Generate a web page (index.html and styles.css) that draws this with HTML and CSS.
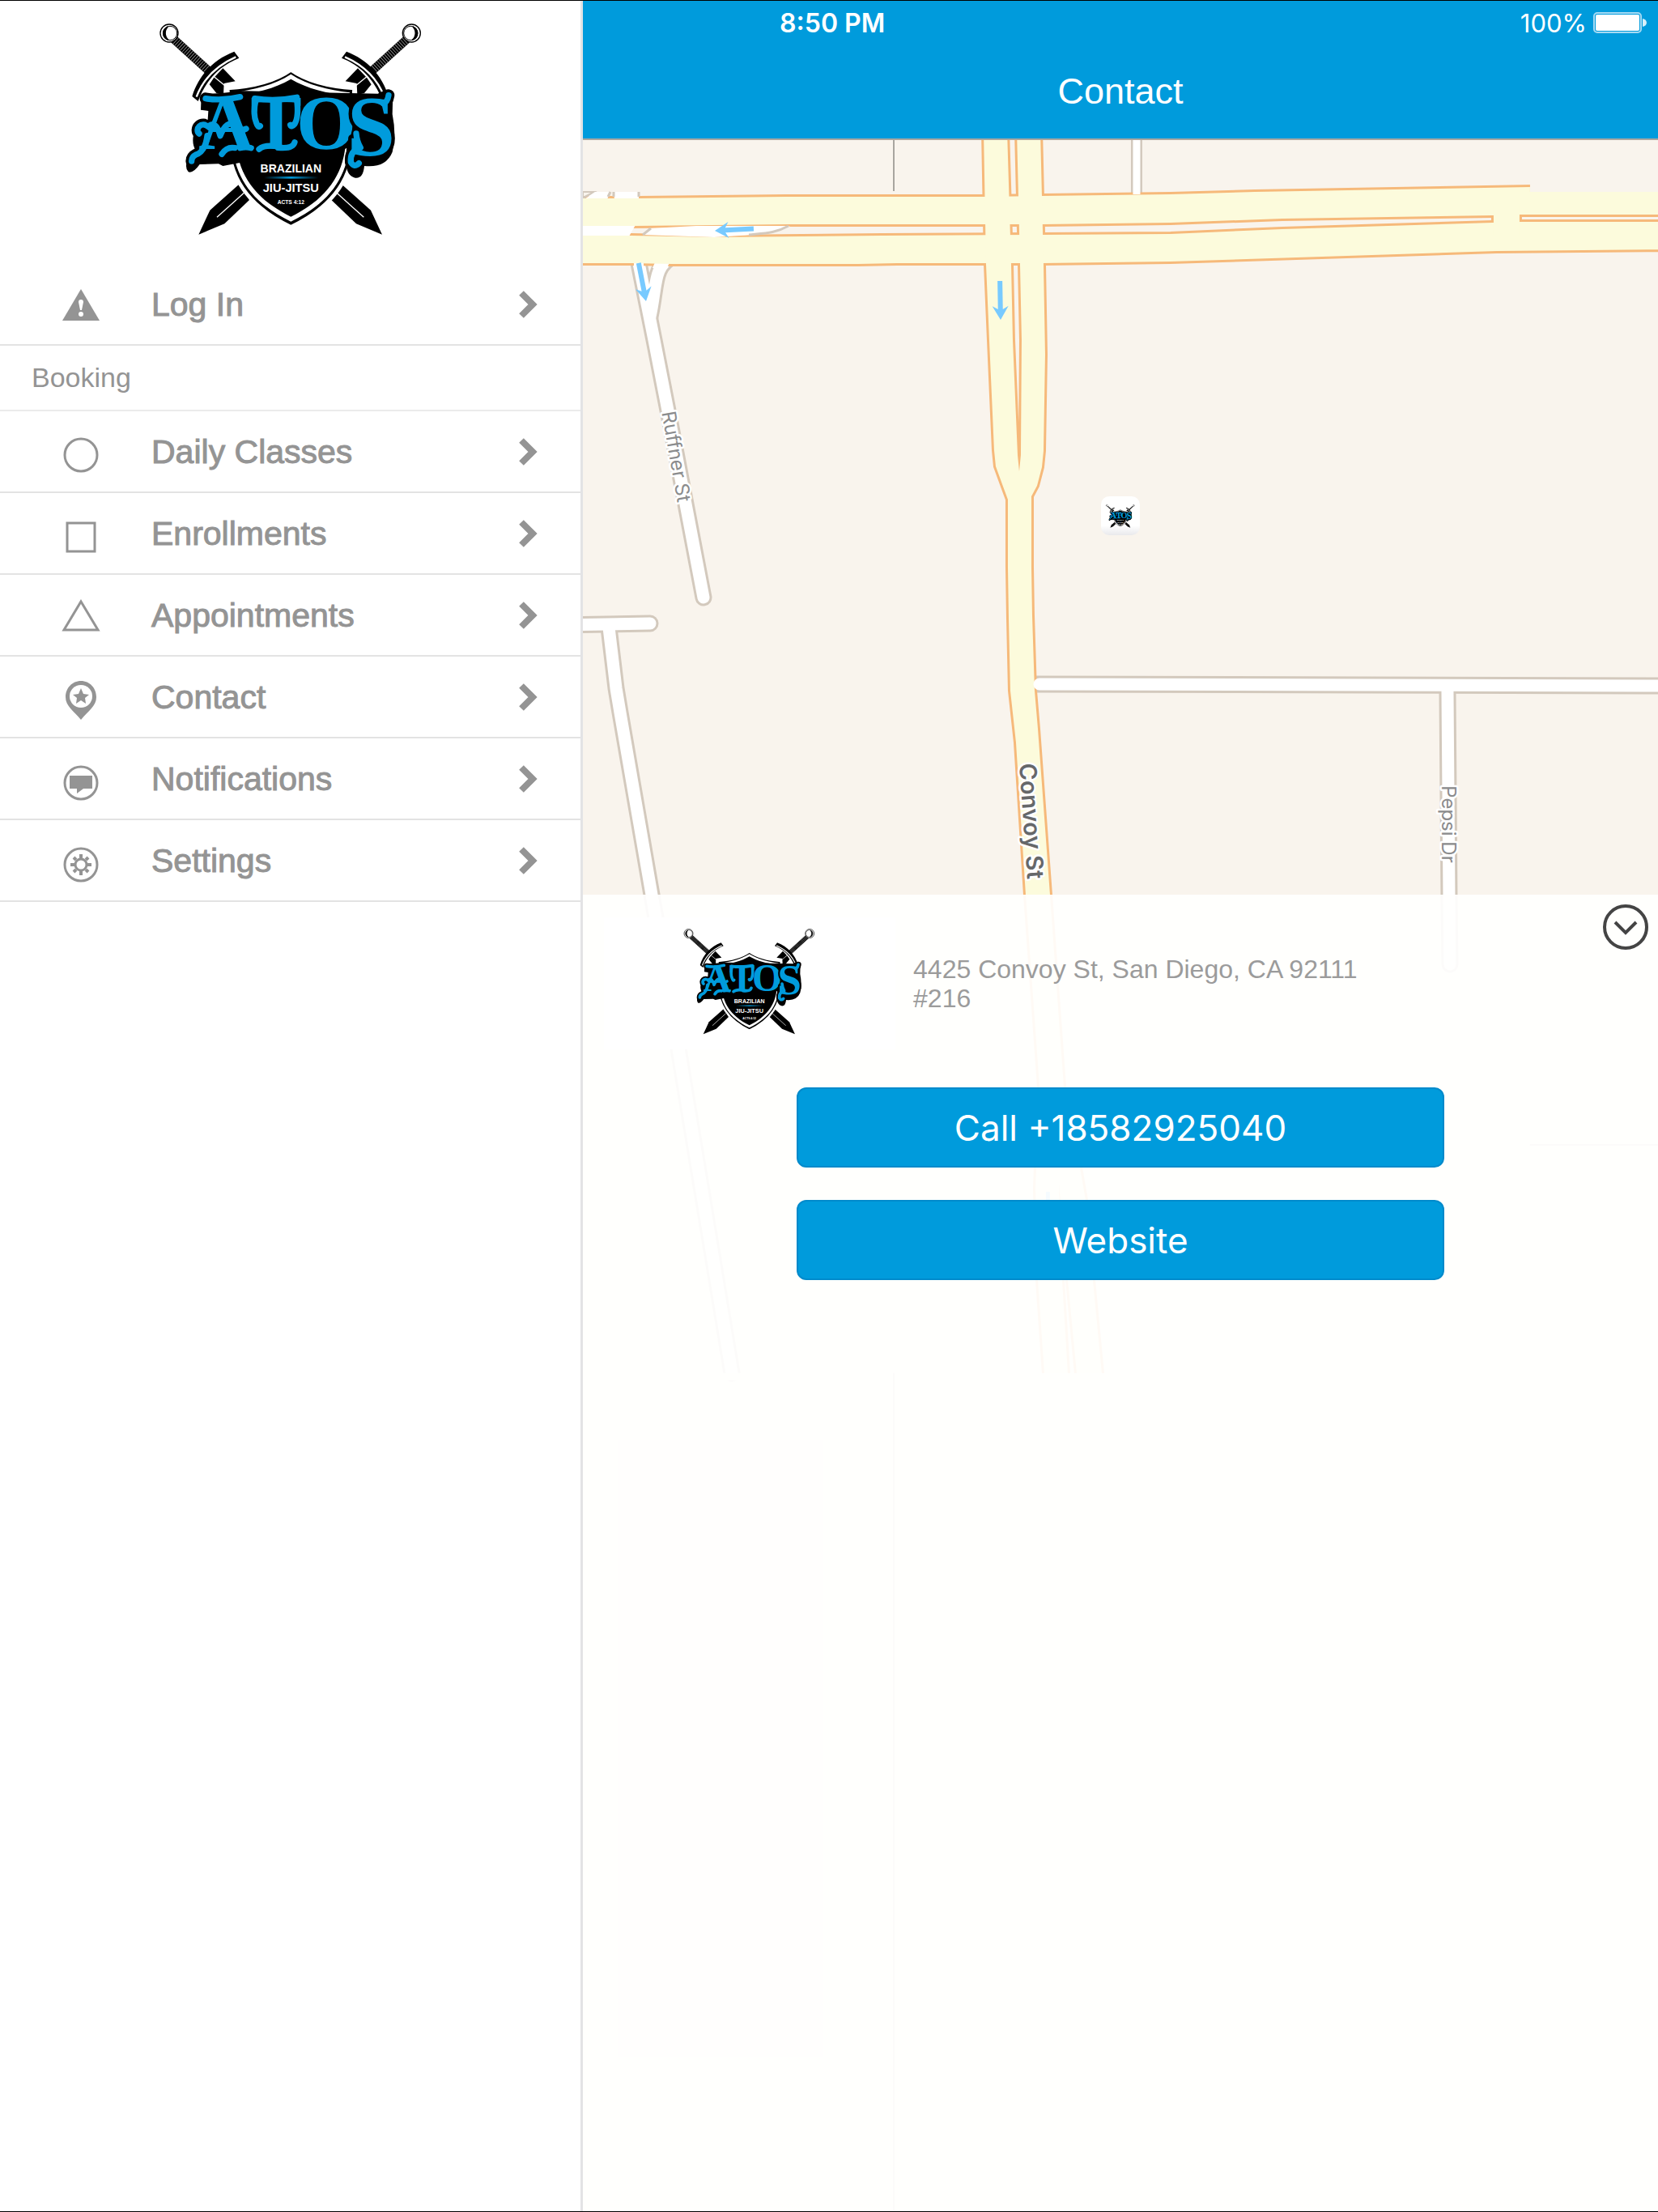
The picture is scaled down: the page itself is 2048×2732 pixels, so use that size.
FILE: index.html
```html
<!DOCTYPE html>
<html lang="en">
<head>
<meta charset="utf-8">
<meta name="viewport" content="width=device-width, initial-scale=1">
<title>Contact</title>
<link rel="stylesheet" href="styles.css">
</head>
<body>
<svg class="defs" aria-hidden="true">
  <defs>
    <linearGradient id="rule" x1="0" x2="1"><stop offset="0" stop-color="#009bdc" stop-opacity="0"/><stop offset=".5" stop-color="#009bdc"/><stop offset="1" stop-color="#009bdc" stop-opacity="0"/></linearGradient>
    <linearGradient id="pinface" x1="0" x2="0" y1="0" y2="1"><stop offset=".75" stop-color="#fff"/><stop offset="1" stop-color="#e9e9ec"/></linearGradient>
    <g id="sword">
      <path d="M348 678 L384 738 L292 826 L196 866 L238 776Z"/>
      <path d="M364 712 L264 802" stroke="#fff" stroke-width="4"/>
      <path d="M104 142 L236 262" stroke="#000" stroke-width="32"/>
      <path d="M104 142 L236 262" stroke="#fff" stroke-width="30" stroke-dasharray="2 7" opacity=".7"/>
      <path d="M252 286 L286 250 L332 298 L290 306 L288 348 L262 342 L236 310Z"/>
      <path d="M254 282 L298 318" stroke="#fff" stroke-width="4"/>
      <path d="M328 188 L346 212 C280 238 226 286 194 372 L172 354 C196 276 250 218 328 188Z"/>
      <path d="M334 208 C262 240 214 286 188 356" fill="none" stroke="#fff" stroke-width="7"/>
      <circle cx="87" cy="120" r="33" fill="#fff" stroke="#000" stroke-width="4"/>
      <circle cx="90" cy="120" r="26" fill="#fff" stroke="#000" stroke-width="3"/>
      <path d="M82 96 A26 26 0 0 0 84 145 A34 34 0 0 1 82 96Z" stroke="#000" stroke-width="4"/>
    </g>
    <g id="flourish" fill="none" stroke-linecap="round" stroke-linejoin="round">
      <path d="M222 362 Q285 372 350 356"/>
      <path d="M236 470 C205 440 180 478 198 492 M236 462 Q262 446 276 500 Q300 440 330 462 Q352 486 372 474"/>
      <path d="M228 500 Q220 560 186 570 Q170 578 170 594 M330 545 Q300 540 282 568 M350 545 Q372 540 390 545"/>
      <path d="M404 362 Q480 374 560 358 M408 366 Q396 420 410 452 Q416 472 424 464 M560 366 Q568 430 552 456 Q540 470 536 460"/>
      <path d="M490 540 Q440 532 420 550 M490 544 Q545 550 552 524"/>
      <path d="M880 380 Q896 376 900 350 M780 492 Q782 520 796 544 Q756 556 760 598 Q772 620 790 602"/>
    </g>
    <symbol id="logo" viewBox="0 0 1080 930">
      <use href="#sword"/>
      <use href="#sword" transform="translate(1072 0) scale(-1 1)"/>
      <path d="M538 256 C600 300 680 318 772 324 V500 C772 650 700 760 538 838 C376 760 304 650 304 500 V324 C396 318 476 300 538 256Z" stroke="#fff" stroke-width="14"/>
      <path d="M538 272 C600 312 676 330 756 340 V500 C756 640 690 745 538 818 C386 745 320 640 320 500 V340 C400 330 476 312 538 272Z" fill="#fff"/>
      <path d="M538 290 C600 326 670 342 742 352 V500 C742 630 680 730 538 800 C396 730 334 630 334 500 V352 C406 342 476 326 538 290Z"/>
      <path d="M206 350 L360 334 L860 344 Q900 320 916 344 L914 420 Q930 500 914 560 Q890 620 810 612 Q806 660 776 656 Q744 648 742 600 L744 545 L700 580 L400 590 L286 612 L270 604 L200 606 Q176 640 158 634 Q144 620 154 590 L186 556 Q164 520 186 470 L230 440 L232 408 L204 404Z"/>
      <use href="#flourish" stroke="#000" stroke-width="44"/>
      <g class="logo-word">
        <text x="196 388 558" y="548">ATO</text>
        <text class="logo-last" x="746" y="572">S</text>
      </g>
      <use href="#flourish" stroke="#009bdc" stroke-width="22"/>
      <g class="logo-lines">
        <text x="538" y="635" font-size="42">BRAZILIAN</text>
        <text x="538" y="707" font-size="44">JIU-JITSU</text>
        <text x="538" y="754" font-size="20">ACTS 4:12</text>
      </g>
      <rect x="438" y="651" width="202" height="8" fill="url(#rule)"/>
    </symbol>
    <symbol id="chevron" viewBox="0 0 24 36"><path d="M4 4 L18 18 L4 32" fill="none" stroke="#949494" stroke-width="8"/></symbol>
    <g id="highways">
      <path d="M700 245 H790 L970 243 H1218 L1288 242 L1446 240 L1550 237 L1890 231 V237 H2070 V265 H1878 L1844 266 L1584 270 L1446 275 L1288 277 H975 L784 279 H700Z"/>
      <path d="M700 291 H780 L882 293 L1090 291 L1288 290 L1446 289 L1584 283 L1844 275 L1878 274 H2070 V308 L1849 310 L1446 323 L1288 325 H1108 L1060 326 L830 326 L780 325 H700Z"/>
      <path d="M1845 255 H1877 V290 H1845Z"/>
      <path d="M1215 160 L1218 326 L1222 420 L1228 556 L1230 576 L1238 598 L1245 617 V700 L1246 763 L1248 853 L1255 917 L1267 1105 L1284 1342 L1279 1468 L1282 1581 L1290 1696 H1319 L1312 1581 L1308 1462 L1319 1581 L1330 1696 H1361 L1350 1581 L1341 1482 L1334 1442 L1314 1342 L1297 1105 L1282 900 L1278 853 L1275 760 L1274 700 V613 L1281 600 L1287 577 L1289 557 L1291 438 L1289 326 L1285 160 H1256 L1260 326 L1262 420 L1261 562 L1259 582 L1257 562 L1251 420 L1249 326 L1244 160Z"/>
    </g>
    <path id="arrow" d="M0 0 L-17 -10 L-13 -3 L-48 -3 V3 L-13 3 L-17 10Z"/>
  </defs>
</svg>

<div class="app">
  <aside class="sidebar">
    <div class="brand"><svg class="brand-logo" role="img" aria-label="Atos Brazilian Jiu-Jitsu"><use href="#logo"/></svg></div>
    <nav>
      <a class="row" href="#login">
        <svg class="icon" viewBox="0 0 56 56"><path d="M28 9 L51 48 H5Z" fill="#949494"/><path d="M25 25 a3 3 0 0 1 6 0 L29 35 H27Z" fill="#fff"/><circle cx="28" cy="40" r="3" fill="#fff"/></svg>
        <span>Log In</span><svg class="chev"><use href="#chevron"/></svg></a>
      <h2 class="group">Booking</h2>
      <a class="row" href="#classes">
        <svg class="icon line" viewBox="0 0 56 56"><circle cx="28" cy="32" r="20"/></svg>
        <span>Daily Classes</span><svg class="chev"><use href="#chevron"/></svg></a>
      <a class="row" href="#enrollments">
        <svg class="icon line" viewBox="0 0 56 56"><path d="M11 15 H45 V50 H11Z"/></svg>
        <span>Enrollments</span><svg class="chev"><use href="#chevron"/></svg></a>
      <a class="row" href="#appointments">
        <svg class="icon line" viewBox="0 0 56 56"><path d="M28 11 L49 46 H7Z"/></svg>
        <span>Appointments</span><svg class="chev"><use href="#chevron"/></svg></a>
      <a class="row" href="#contact">
        <svg class="icon" viewBox="0 0 56 56"><path fill="#949494" d="M28 8 C39 8 47 17 47 28 C47 39 37 45 28 56 C19 45 9 39 9 28 C9 17 17 8 28 8Z"/><circle cx="28" cy="27" r="14" fill="#fff"/><path fill="#949494" d="M28 17 L31 24 L38 25 L33 29 L34 36 L28 32 L22 36 L23 29 L18 25 L25 24Z"/></svg>
        <span>Contact</span><svg class="chev"><use href="#chevron"/></svg></a>
      <a class="row" href="#notifications">
        <svg class="icon line" viewBox="0 0 56 56"><circle cx="28" cy="33" r="20"/><path d="M14 24 H42 V40 H31 L23 46 V40 H14Z" fill="#949494" stroke="none"/></svg>
        <span>Notifications</span><svg class="chev"><use href="#chevron"/></svg></a>
      <a class="row" href="#settings">
        <svg class="icon line" viewBox="0 0 56 56"><circle cx="28" cy="33" r="20"/><circle cx="28" cy="33" r="7"/><path stroke-width="4" d="M28 25 V20 M28 41 V46 M20 33 H15 M36 33 H41 M22 27 L19 24 M34 27 L37 24 M22 39 L19 42 M34 39 L37 42"/></svg>
        <span>Settings</span><svg class="chev"><use href="#chevron"/></svg></a>
    </nav>
  </aside>

  <main class="main">
    <header class="topbar">
      <div class="status">
        <time class="clock">8:50 PM</time>
        <span class="battery">100%
          <svg width="66" height="26" viewBox="0 0 66 26" aria-hidden="true"><rect x="1" y="1" width="58" height="24" rx="4" fill="none" stroke="#a6daf3" stroke-width="2"/><rect x="3" y="3" width="54" height="20" rx="2" fill="#fff"/><path d="M61 8 Q66 9 66 13 Q66 17 61 18Z" fill="#d9f0fa"/></svg>
        </span>
      </div>
      <h1>Contact</h1>
    </header>

    <section class="stage">
      <svg class="map" viewBox="720 173 1328 2559" preserveAspectRatio="xMidYMin slice" role="img" aria-label="Map of Convoy St">
        <g stroke="#d3c9bd" fill="none">
          <path d="M1104 173 V236" stroke="#a9a6a0" stroke-width="2"/>
          <path d="M1104 1697 V2732 M1890 1414 H2048" stroke-width="2"/>
        </g>
        <g class="streets street-edge">
          <path d="M1404 160 V250"/><path class="wide" d="M788 320 L808 420 L825 507 L869 738"/>
          <path class="wide" d="M832 316 C806 330 812 350 803 391"/>
          <path class="wide" d="M700 772 L803 770"/><path class="wide" d="M752 775 L761 850 L766 880 L805 1105 L838 1295 L904 1696"/>
          <path class="wide" d="M1270 845 L2060 847"/><path class="wide" d="M1788 850 L1790 1105 L1791 1191"/>
        </g>
        <g class="streets street-fill">
          <path d="M752 775 L761 850 L766 880 L805 1105 L838 1295 L904 1696"/>
          <path d="M700 772 L803 770"/>
          <path d="M788 320 L808 420 L825 507 L869 738"/>
          <path d="M832 316 C806 330 812 350 803 391"/>
          <path d="M1788 850 L1790 1105 L1791 1191"/>
        </g>
        <use href="#highways" fill="none" stroke="#f6b97a" stroke-width="6"/>
        <path d="M720 237 H734 L720 245Z M720 237 V244 L734 237" fill="#f9f4ed" stroke="#d3c9bd" stroke-width="2"/>
        <path d="M735 237 H754 L750 246 H722Z M758 237 H789 V246 H759Z M720 276 H786 L777 292 H720Z" fill="#fff"/>
        <path d="M804 282 L860 279 H976 C950 290 930 290 882 293 L794 290Z" fill="#fff"/>
        <path d="M974 279 C958 288 945 288 925 290 M804 282 L794 290 M789 237 V243 M754 237 L751 243 M758 237 V243" fill="none" stroke="#d3c9bd" stroke-width="3"/>
        <path d="M783 322 H795 V330 H783Z M810 322 H828 L824 331 H806Z" fill="#fff"/>
        <use href="#highways" fill="#fcfbdc"/>
        <path d="M1890 228 V237 H2060 V228Z" fill="#f9f4ed"/>
        <g class="streets street-fill">
          <path class="thin" d="M1404 160 V240"/><path d="M1284 845 L2060 847"/>
        </g>
        <rect x="720" y="1696" width="1328" height="9" fill="#f9f4ed"/>
        <path d="M1104 1696 V1706" stroke="#d3c9bd" stroke-width="2"/>
        <g fill="#78caff">
          <use href="#arrow" transform="translate(883 285) rotate(177)"/>
          <use href="#arrow" transform="translate(798 372) rotate(79)"/>
          <use href="#arrow" transform="translate(1236 395) rotate(89)"/>
          <rect x="1292" y="1472" width="5" height="36"/>
        </g>
        <g class="labels">
          <text transform="translate(835 564) rotate(80)" y="8" font-size="24">Ruffner St</text>
          <text transform="translate(1789 1018) rotate(90)" y="8" font-size="24">Pepsi Dr</text>
          <text class="major" transform="translate(1274 1014) rotate(86)" y="10" font-size="29">Convoy St</text>
        </g>
        <rect x="1360" y="613" width="48" height="48" rx="10" fill="url(#pinface)"/>
        <use href="#logo" x="1364" y="620" width="40" height="34"/>
      </svg>

      <div class="panel">
        <button class="collapse" type="button" aria-label="Collapse">
          <svg width="58" height="58" viewBox="0 0 58 58" fill="none" stroke="#444" stroke-width="4"><circle cx="29" cy="29" r="26"/><path d="M16 23 L29 36 L42 23"/></svg>
        </button>
        <div class="info">
          <div class="thumb"><svg class="thumb-logo" role="img" aria-label="Atos logo"><use href="#logo"/></svg></div>
          <address>4425 Convoy St, San Diego, CA 92111<br>#216</address>
        </div>
        <div class="actions">
          <button class="action" type="button">Call +18582925040</button>
          <button class="action" type="button">Website</button>
        </div>
      </div>
    </section>
  </main>
</div>
</body>
</html>
```
FILE: styles.css
```css
* { box-sizing: border-box; }

body {
  margin: 0;
  background: #fff;
  font-family: "Liberation Sans", Arial, sans-serif;
}

.defs { position: absolute; width: 0; height: 0; }

.app {
  display: flex;
  min-height: 100vh;
  border-top: 1px solid #000;
  border-bottom: 1px solid #000;
}

/* Sidebar */
.sidebar {
  flex: none;
  width: 35.16%;
  border-right: 3px solid #e3e3e5;
  color: #949494;
}

.brand { display: flex; justify-content: center; height: 325px; padding-left: 3px; }
.brand-logo { width: 360px; height: 310px; }

.row {
  display: flex;
  align-items: center;
  height: 101px;
  padding: 0 53px 0 72px;
  border-bottom: 2px solid #e3e3e3;
  color: inherit;
  font-size: 41px;
  line-height: 48px;
  text-decoration: none;
  -webkit-text-stroke: 1px #949494;
}
.row span { flex: 1; padding-left: 59px; }

.icon { width: 56px; height: 56px; }
.line { fill: none; stroke: #949494; stroke-width: 3; }
.chev { width: 24px; height: 36px; }

.group {
  display: flex;
  align-items: center;
  height: 81px;
  margin: 0;
  padding-left: 39px;
  border-bottom: 2px solid #ebebeb;
  font-size: 34px;
  font-weight: 400;
}

/* Header */
.main { display: flex; flex: 1; flex-direction: column; min-width: 0; }

.topbar {
  height: 172px;
  border-bottom: 2px solid #a9a6a0;
  background: #009bdc;
  color: #fff;
}

.status {
  display: flex;
  align-items: center;
  justify-content: space-between;
  height: 54px;
  padding: 0 14px 0 243px;
  font-family: Inter, sans-serif;
  font-size: 31px;
}
.clock { font-size: 32px; font-weight: 600; }
.battery { display: flex; align-items: center; gap: 8px; }

.topbar h1 {
  margin: 0;
  padding-top: 32px;
  font-size: 45px;
  font-weight: 400;
  line-height: 52px;
  text-align: center;
}

/* Map and the contact panel laid over it */
.stage {
  display: grid;
  flex: 1;
  grid-template-rows: 932px 1fr;
  background: #f9f4ed;
}
/* Zero height keeps the drawing's own ratio from stretching the page */
.map { grid-area: 1 / 1 / 3 / 2; width: 100%; height: 0; min-height: 100%; }
.panel {
  position: relative;
  grid-area: 2 / 1 / 3 / 2;
  padding: 28px 26px;
  background: rgba(255, 255, 254, 0.93);
}

.streets { fill: none; stroke-linecap: round; stroke-linejoin: round; }
.street-edge { stroke: #d3c9bd; stroke-width: 14px; }
.street-edge .wide { stroke-width: 21px; }
.street-fill { stroke: #fff; stroke-width: 15px; }
.street-fill .thin { stroke-width: 9px; stroke-linecap: butt; }

.labels {
  fill: #8b8c8d;
  stroke: #fff;
  stroke-width: 5px;
  stroke-linejoin: round;
  paint-order: stroke;
  font-family: Inter, sans-serif;
  text-anchor: middle;
}
.major { fill: #66686a; font-weight: 600; }

.logo-word {
  fill: #009bdc;
  stroke: #000;
  stroke-width: 26px;
  stroke-linejoin: round;
  paint-order: stroke;
  font-family: "Liberation Serif", serif;
  font-size: 286px;
  font-weight: 700;
}
.logo-last { font-size: 320px; }
.logo-lines {
  fill: #fff;
  font-family: "Liberation Sans", sans-serif;
  font-weight: 700;
  text-anchor: middle;
}

/* Panel content */
.collapse {
  position: absolute;
  top: 11px;
  right: 11px;
  width: 58px;
  height: 58px;
  padding: 0;
  border: 0;
  background: none;
}

.info { display: flex; align-items: center; gap: 22px; }
.thumb { width: 360px; height: 163px; background: #fff; text-align: center; }
.thumb-logo { width: 180px; height: 155px; }

address {
  color: #9b9b9b;
  font-size: 32px;
  font-style: normal;
  line-height: 36px;
}

.actions {
  display: flex;
  flex-direction: column;
  align-items: center;
  gap: 40px;
  margin-top: 47px;
}
.action {
  width: 800px;
  max-width: 100%;
  height: 99px;
  border: 2px solid #008acb;
  border-radius: 12px;
  background: #009bdc;
  color: #fff;
  font-family: Inter, sans-serif;
  font-size: 44px;
}
```
